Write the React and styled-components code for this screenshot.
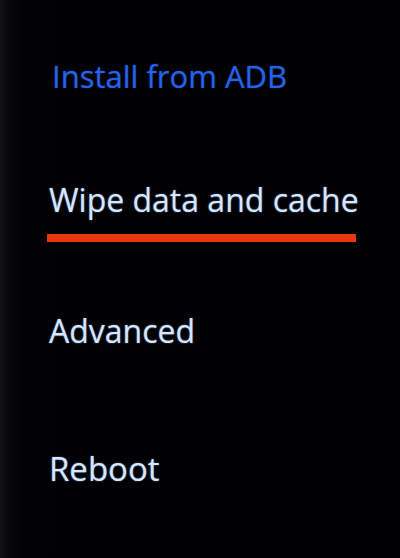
import React from "react";
import styled, { createGlobalStyle } from "styled-components";

const Global = createGlobalStyle`
  html, body {
    margin: 0;
    padding: 0;
    background: #010103;
  }
  body {
    width: 400px;
    height: 558px;
    overflow: hidden;
  }
`;

const Screen = styled.div`
  width: 400px;
  height: 558px;
  box-sizing: border-box;
  background:
    linear-gradient(90deg, #141416 0px, #0a0a0c 6px, #050507 14px, #020204 22px, #010103 60px);
  display: flex;
  flex-direction: column;
  padding: 56px 0 0 49px;
  font-family: "Open Sans", "Noto Sans", sans-serif;
`;

const Item = styled.div`
  font-size: ${(p) => p.$size}px;
  line-height: 40px;
  height: 40px;
  color: ${(p) => (p.$dim ? "#2563ea" : "#d6e6ff")};
  text-shadow: ${(p) =>
    p.$dim ? "0 0 2px rgba(40,100,240,0.5)" : "0 0 2px rgba(150,190,255,0.6)"};
  margin-top: ${(p) => p.$gap || 0}px;
  margin-left: ${(p) => p.$indent || 0}px;
  white-space: nowrap;
`;

const Highlight = styled.div`
  width: 309px;
  height: 8px;
  margin-top: 14px;
  margin-left: -2px;
  background: #e8360e;
`;

export default function App() {
  return (
    <>
      <Global />
      <Screen>
        <Item $dim $size={31} $indent={3}>Install from ADB</Item>
        <Item $size={32} $gap={84}>Wipe data and cache</Item>
        <Highlight />
        <Item $size={32} $gap={69}>Advanced</Item>
        <Item $size={33} $gap={98}>Reboot</Item>
      </Screen>
    </>
  );
}
